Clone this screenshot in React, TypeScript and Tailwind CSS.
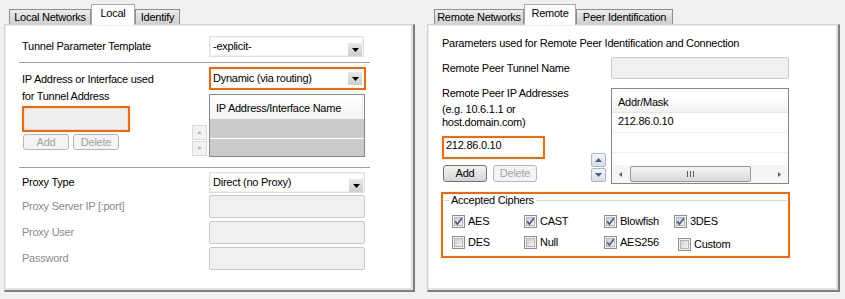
import React from "react";

function Tab({ label, selected, className }: { label: string; selected?: boolean; className: string }) {
  if (selected) {
    return (
      <div
        className={`relative z-10 h-[21px] -mb-px bg-white border border-b-0 border-[#a9a9a9] flex items-center justify-center pb-[3px] ${className}`}
      >
        {label}
      </div>
    );
  }
  return (
    <div
      className={`h-[15px] border border-b-0 border-[#8c8e94] bg-gradient-to-b from-[#ececec] to-[#d0d0d0] flex items-center justify-center ${className}`}
    >
      {label}
    </div>
  );
}

function ArrowBtn({ className }: { className: string }) {
  return (
    <div className={`w-[14px] h-[13px] bg-gradient-to-b from-[#e8e8e8] to-[#cdcdcd] flex items-center justify-center ${className}`}>
      <svg width="7" height="4" viewBox="0 0 7 4">
        <polygon points="0,0 7,0 3.5,4" fill="#000" />
      </svg>
    </div>
  );
}

function Combo({ text, className }: { text: string; className: string }) {
  return (
    <div className={`flex bg-white border border-[#e0e0e0] shadow-[inset_0_0_0_1px_#f2f2f2] ${className}`}>
      <span className="flex-1 self-center pl-[3px] leading-none">{text}</span>
      <ArrowBtn className="self-end mr-[1px]" />
    </div>
  );
}

function Btn({ label, disabled, className }: { label: string; disabled?: boolean; className: string }) {
  return (
    <div
      className={`flex items-center justify-center rounded-[3px] border leading-none ${
        disabled
          ? "border-[#b5b8ba] bg-[#f4f4f4] text-[#a3a3a3]"
          : "border-[#707070] bg-gradient-to-b from-[#f3f3f3] to-[#d6d6d6] text-black"
      } ${className}`}
    >
      {label}
    </div>
  );
}

function SpinGray({ className }: { className: string }) {
  return (
    <div className={`w-[15px] flex flex-col gap-[1px] ${className}`}>
      <div className="h-[15px] bg-[#f3f3f3] border border-[#d9d9d9] flex items-center justify-center">
        <svg width="5" height="3" viewBox="0 0 5 3">
          <polygon points="0,3 5,3 2.5,0" fill="#b9b9b9" />
        </svg>
      </div>
      <div className="h-[15px] bg-[#f3f3f3] border border-[#d9d9d9] flex items-center justify-center">
        <svg width="5" height="3" viewBox="0 0 5 3">
          <polygon points="0,0 5,0 2.5,3" fill="#b9b9b9" />
        </svg>
      </div>
    </div>
  );
}

function SpinBlue({ className }: { className: string }) {
  return (
    <div className={`w-[15px] flex flex-col gap-[1px] ${className}`}>
      <div className="h-[14px] bg-gradient-to-b from-[#f2f5f9] to-[#d8dee6] border border-[#b0b7c2] rounded-[2px] flex items-center justify-center">
        <svg width="7" height="4" viewBox="0 0 7 4">
          <polygon points="0,4 7,4 3.5,0" fill="#4b5f8a" />
        </svg>
      </div>
      <div className="h-[14px] bg-gradient-to-b from-[#f2f5f9] to-[#d8dee6] border border-[#b0b7c2] rounded-[2px] flex items-center justify-center">
        <svg width="7" height="4" viewBox="0 0 7 4">
          <polygon points="0,0 7,0 3.5,4" fill="#4b5f8a" />
        </svg>
      </div>
    </div>
  );
}

function Check({ label, checked, className }: { label: string; checked?: boolean; className?: string }) {
  return (
    <div className={`flex items-center gap-[3px] h-[13px] ${className ?? ""}`}>
      <svg width="13" height="13" viewBox="0 0 13 13" className="shrink-0">
        <defs>
          <linearGradient id="cbg" x1="0" y1="0" x2="1" y2="1">
            <stop offset="0" stopColor="#cdcdcd" />
            <stop offset="1" stopColor="#f7f7f7" />
          </linearGradient>
        </defs>
        <rect x="0.5" y="0.5" width="12" height="12" fill="#f3f3f3" stroke="#8e8f8f" />
        <rect x="2.5" y="2.5" width="8" height="8" fill="url(#cbg)" stroke="#b4b4b4" />
        {checked && <path d="M3.2 6.4 L5.4 9.2 L9.8 3.2" fill="none" stroke="#4a5c8c" strokeWidth="1.7" />}
      </svg>
      <span className="leading-none">{label}</span>
    </div>
  );
}

const panelBody =
  "h-[268px] bg-white border-l border-t border-[#d2d2d2] border-r-2 border-b-2 border-r-[#7f7f7f] border-b-[#7f7f7f] shadow-[inset_-2px_-2px_0_#e2e2e2,inset_1px_1px_0_#ededed]";

function LeftPanel() {
  return (
    <div className="w-[411px] flex flex-col shrink-0">
      <div className="h-[20px] flex items-end pl-[5px]">
        <Tab className="w-[82px]" label="Local Networks" />
        <Tab className="w-[44px]" label="Local" selected />
        <Tab className="w-[45px]" label="Identify" />
      </div>
      <div className={panelBody}>
        <div className="mt-[11px] h-[21px] flex items-center pl-[17px]">
          <div className="w-[187px] leading-none">Tunnel Parameter Template</div>
          <Combo className="w-[155px] h-[21px]" text="-explicit-" />
        </div>
        <div className="mt-[5px] ml-[14px] w-[351px] h-px bg-[#a0a0a0]" />
        <div className="h-[104px] flex items-start pl-[17px]">
          <div className="w-[170px] flex flex-col items-start">
            <div className="mt-[8px] leading-[17px]">
              IP Address or Interface used
              <br />
              for Tunnel Address
            </div>
            <div className="mt-[1px] w-[108px] h-[26px] border-2 border-[#ff6600]">
              <div className="w-full h-full bg-[#efefef] border border-[#dcdcdc]" />
            </div>
            <div className="mt-[2px] ml-[1px] flex gap-[4px]">
              <Btn className="w-[46px] h-[16px]" label="Add" disabled />
              <Btn className="w-[46px] h-[16px]" label="Delete" disabled />
            </div>
          </div>
          <SpinGray className="mt-[62px]" />
          <div className="ml-[2px] mt-[4px] flex flex-col">
            <div className="w-[157px] h-[23px] border-2 border-[#ff6600] bg-white flex items-center">
              <span className="flex-1 pl-[2px] leading-none">Dynamic (via routing)</span>
              <ArrowBtn className="mr-[2px]" />
            </div>
            <div className="mt-[4px] w-[156px] h-[63px] border border-[#828790] flex flex-col">
              <div className="h-[24px] flex items-center pl-[6px] pt-[2px] bg-gradient-to-b from-white to-[#f4f4f4] border-r border-[#e5e5e5] mr-[1px]">
                <span className="leading-none">IP Address/Interface Name</span>
              </div>
              <div className="h-[19px] bg-[#cbcbcb]" />
              <div className="h-px bg-white" />
              <div className="h-[17px] bg-[#cbcbcb]" />
            </div>
          </div>
        </div>
        <div className="ml-[14px] w-[351px] h-px bg-[#a0a0a0]" />
        <div className="mt-[4px] h-[21px] flex items-center pl-[17px]">
          <div className="w-[187px] leading-none">Proxy Type</div>
          <Combo className="w-[156px] h-[21px]" text="Direct (no Proxy)" />
        </div>
        <div className="mt-[2px] h-[23px] flex items-center pl-[17px]">
          <div className="w-[187px] leading-none text-[#8a8a8a]">Proxy Server IP [:port]</div>
          <div className="w-[156px] h-[23px] bg-[#f0f0f0] border border-[#c8c8c8] rounded-[2px]" />
        </div>
        <div className="mt-[3px] h-[23px] flex items-center pl-[17px]">
          <div className="w-[187px] leading-none text-[#8a8a8a]">Proxy User</div>
          <div className="w-[156px] h-[23px] bg-[#f0f0f0] border border-[#c8c8c8] rounded-[2px]" />
        </div>
        <div className="mt-[3px] h-[23px] flex items-center pl-[17px]">
          <div className="w-[187px] leading-none text-[#8a8a8a]">Password</div>
          <div className="w-[156px] h-[23px] bg-[#f0f0f0] border border-[#c8c8c8] rounded-[2px]" />
        </div>
      </div>
    </div>
  );
}

function RightPanel() {
  return (
    <div className="w-[413px] flex flex-col shrink-0">
      <div className="h-[20px] flex items-end pl-[7px]">
        <Tab className="w-[90px]" label="Remote Networks" />
        <Tab className="w-[52px]" label="Remote" selected />
        <Tab className="w-[97px]" label="Peer Identification" />
      </div>
      <div className={panelBody}>
        <div className="mt-[11px] pl-[14px] leading-[15px]">
          Parameters used for Remote Peer Identification and Connection
        </div>
        <div className="mt-[6px] h-[22px] flex items-center pl-[14px]">
          <div className="w-[169px] leading-none">Remote Peer Tunnel Name</div>
          <div className="w-[178px] h-[22px] bg-[#f0f0f0] border border-[#c8c8c8] rounded-[2px]" />
        </div>
        <div className="h-[105px] flex items-start pl-[14px]">
          <div className="w-[149px] flex flex-col items-start">
            <div className="mt-[7px] leading-[15px]">Remote Peer IP Addresses</div>
            <div className="mt-[2px] leading-[13px]">
              (e.g. 10.6.1.1 or
              <br />
              host.domain.com)
            </div>
            <div className="mt-[7px] w-[103px] h-[23px] border-2 border-[#ff6600] bg-white pl-[2px] leading-[14px]">
              212.86.0.10
            </div>
            <div className="mt-[6px] ml-[1px] flex gap-[6px]">
              <Btn className="w-[44px] h-[17px]" label="Add" />
              <Btn className="w-[44px] h-[17px]" label="Delete" disabled />
            </div>
          </div>
          <SpinBlue className="mt-[74px]" />
          <div className="ml-[5px] mt-[9px] w-[178px] h-[96px] border border-[#828790] flex flex-col">
            <div className="h-[24px] flex items-center pl-[6px] pt-[3px] bg-gradient-to-b from-white from-40% to-[#f1f1f1] border-b border-[#e5e5e5]">
              <span className="leading-none">Addr/Mask</span>
            </div>
            <div className="h-[20px] flex items-center pl-[6px] pb-[2px] border-b border-[#f0f0f0]">
              <span className="leading-none">212.86.0.10</span>
            </div>
            <div className="h-[20px] border-b border-[#f0f0f0]" />
            <div className="flex-1" />
            <div className="h-[18px] bg-[#f5f5f5] flex items-center">
              <div className="w-[17px] flex justify-center">
                <svg width="3" height="5" viewBox="0 0 3 5">
                  <polygon points="3,0 3,5 0,2.5" fill="#5a5a5a" />
                </svg>
              </div>
              <div className="ml-px w-[121px] h-[16px] rounded-[2px] border border-[#979797] bg-gradient-to-b from-[#f3f3f3] to-[#d9d9d9] flex items-center justify-center">
                <svg width="7" height="6" viewBox="0 0 7 6">
                  <rect x="0" y="0" width="1" height="6" fill="#5c5c5c" />
                  <rect x="3" y="0" width="1" height="6" fill="#5c5c5c" />
                  <rect x="6" y="0" width="1" height="6" fill="#5c5c5c" />
                </svg>
              </div>
              <div className="flex-1" />
              <div className="w-[17px] flex justify-center">
                <svg width="3" height="5" viewBox="0 0 3 5">
                  <polygon points="0,0 0,5 3,2.5" fill="#5a5a5a" />
                </svg>
              </div>
            </div>
          </div>
        </div>
        <div className="mt-[8px] ml-[13px] w-[349px] h-[66px] border-2 border-[#ff6600] flex flex-col">
          <div className="h-[13px] flex items-center">
            <div className="ml-px w-[5px] h-px bg-[#d5d9de]" />
            <span className="px-[2px] leading-none">Accepted Ciphers</span>
            <div className="flex-1 mr-px h-px bg-[#d5d9de]" />
          </div>
          <div className="mt-[8px] ml-[9px] grid grid-cols-[72px_80px_70px_80px] gap-y-[8px] items-start">
            <Check label="AES" checked />
            <Check label="CAST" checked />
            <Check label="Blowfish" checked />
            <Check label="3DES" checked />
            <Check label="DES" />
            <Check label="Null" />
            <Check label="AES256" checked />
            <Check label="Custom" className="ml-[4px] mt-[2px]" />
          </div>
        </div>
      </div>
    </div>
  );
}

export default function App() {
  return (
    <div className="w-[845px] h-[299px] bg-[#f0f0f0] flex gap-[12px] pl-[4px] pt-[4px] overflow-hidden font-['Liberation_Sans',Arial,sans-serif] text-[11px] tracking-[-0.25px] text-black">
      <LeftPanel />
      <RightPanel />
    </div>
  );
}
